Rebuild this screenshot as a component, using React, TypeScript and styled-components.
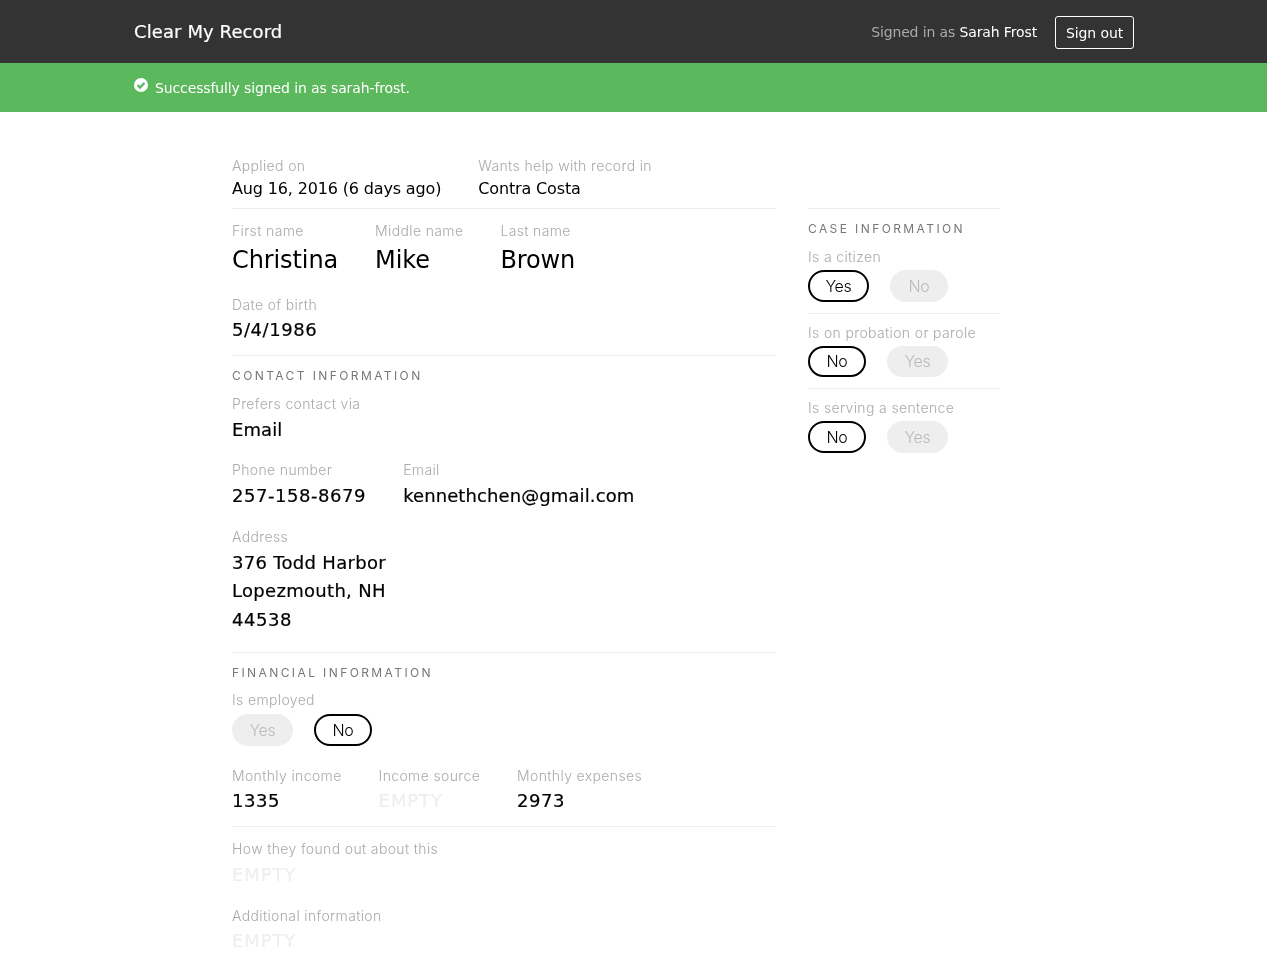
import React from "react";
import styled, { createGlobalStyle } from "styled-components";

const GlobalStyle = createGlobalStyle`
  html, body {
    margin: 0;
    padding: 0;
    background: #ffffff;
    font-family: "DejaVu Sans", Verdana, sans-serif;
    font-weight: 400;
    color: #000000;
  }
`;

const thinFont = `Inter, "Noto Sans", sans-serif`;

function CheckIcon() {
  return (
    <svg width="14" height="14" viewBox="0 0 14 14">
      <circle cx="7" cy="7" r="7" fill="#ffffff" />
      <path d="M3.6 7.2 L6 9.5 L10.4 5" fill="none" stroke="#5cb85c" strokeWidth="2.4" />
    </svg>
  );
}

function Toggle({ options }: { options: { label: string; on?: boolean }[] }) {
  return (
    <ToggleRow>
      {options.map((o) => (
        <Pill key={o.label} on={o.on} wide={o.label === "Yes"}>
          {o.label}
        </Pill>
      ))}
    </ToggleRow>
  );
}

function App() {
  return (
    <Root>
      <GlobalStyle />
      <Navbar>
        <Container>
          <Brand>Clear My Record</Brand>
          <NavRight>
            <SignedIn>
              Signed in as <strong>Sarah Frost</strong>
            </SignedIn>
            <SignOut>Sign out</SignOut>
          </NavRight>
        </Container>
      </Navbar>
      <Flash>
        <FlashInner>
          <FlashIcon>
            <CheckIcon />
          </FlashIcon>
          <span>Successfully signed in as sarah-frost.</span>
        </FlashInner>
      </Flash>
      <Page>
        <Main>
          <TopRow>
            <Field>
              <Label>Applied on</Label>
              <PlainValue>Aug 16, 2016 (6 days ago)</PlainValue>
            </Field>
            <Field>
              <Label>Wants help with record in</Label>
              <PlainValue>Contra Costa</PlainValue>
            </Field>
          </TopRow>
          <Section>
            <NameRow>
              <Field>
                <Label>First name</Label>
                <NameValue>Christina</NameValue>
              </Field>
              <Field>
                <Label>Middle name</Label>
                <NameValue>Mike</NameValue>
              </Field>
              <Field>
                <Label>Last name</Label>
                <NameValue>Brown</NameValue>
              </Field>
            </NameRow>
            <DobRow>
              <Field>
                <Label>Date of birth</Label>
                <Value digits>5/4/1986</Value>
              </Field>
            </DobRow>
          </Section>
          <Section>
            <Heading>Contact information</Heading>
            <Row>
              <Field>
                <Label>Prefers contact via</Label>
                <Value nudge={0.5}>Email</Value>
              </Field>
            </Row>
            <Row below={17}>
              <Field>
                <Label>Phone number</Label>
                <Value digits nudge={0.5}>257-158-8679</Value>
              </Field>
              <Field>
                <Label>Email</Label>
                <Value nudge={0.5}>kennethchen@gmail.com</Value>
              </Field>
            </Row>
            <Row below={18}>
              <Field>
                <Label>Address</Label>
                <Value address nudge={0.5}>376 Todd Harbor</Value>
                <Value address>Lopezmouth, NH</Value>
                <Value digits>44538</Value>
              </Field>
            </Row>
          </Section>
          <Section>
            <Heading>Financial information</Heading>
            <EmployedRow below={20.5}>
              <Field>
                <Label>Is employed</Label>
                <Toggle options={[{ label: "Yes" }, { label: "No", on: true }]} />
              </Field>
            </EmployedRow>
            <Row below={11}>
              <Field>
                <Label>Monthly income</Label>
                <Value digits nudge={-0.5}>1335</Value>
              </Field>
              <Field>
                <Label>Income source</Label>
                <Value empty nudge={-0.5}>EMPTY</Value>
              </Field>
              <Field>
                <Label>Monthly expenses</Label>
                <Value digits nudge={-0.5}>2973</Value>
              </Field>
            </Row>
          </Section>
          <Section>
            <Row below={17}>
              <Field>
                <Label>How they found out about this</Label>
                <Value empty nudge={0.5}>EMPTY</Value>
              </Field>
            </Row>
            <Row>
              <Field>
                <Label>Additional information</Label>
                <Value empty nudge={-0.5}>EMPTY</Value>
              </Field>
            </Row>
          </Section>
        </Main>
        <Side>
          <SideBlock first>
            <Heading>Case information</Heading>
            <Label>Is a citizen</Label>
            <Toggle options={[{ label: "Yes", on: true }, { label: "No" }]} />
          </SideBlock>
          <SideBlock>
            <Label>Is on probation or parole</Label>
            <Toggle options={[{ label: "No", on: true }, { label: "Yes" }]} />
          </SideBlock>
          <SideBlock>
            <Label>Is serving a sentence</Label>
            <Toggle options={[{ label: "No", on: true }, { label: "Yes" }]} />
          </SideBlock>
        </Side>
      </Page>
    </Root>
  );
}

export default App;

const Root = styled.div`
  will-change: transform;
`;
const Navbar = styled.header`
  height: 63px;
  background: #333333;
`;
const Container = styled.div`
  width: 1000px;
  height: 100%;
  margin-left: 134px;
  display: flex;
  align-items: center;
  justify-content: space-between;
`;
const Brand = styled.div`
  color: #ffffff;
  font-size: 18px;
  font-weight: 400;
  letter-spacing: 0.1px;
  -webkit-text-stroke: 0.2px #ffffff;
`;
const NavRight = styled.div`
  display: flex;
  align-items: center;
  gap: 18px;
`;
const SignedIn = styled.div`
  color: #aaaaaa;
  font-size: 14px;
  letter-spacing: -0.13px;
  strong {
    color: #ffffff;
    font-weight: 400;
  }
`;
const SignOut = styled.button`
  height: 33px;
  width: 79px;
  margin-top: 2px;
  padding: 0;
  background: transparent;
  border: 1px solid #ffffff;
  border-radius: 3px;
  color: #ffffff;
  font: inherit;
  font-size: 14px;
  letter-spacing: -0.1px;
`;
const Flash = styled.div`
  height: 49px;
  background: #5cb85c;
`;
const FlashInner = styled.div`
  margin-left: 134px;
  padding-top: 15px;
  display: flex;
  gap: 7px;
  color: #ffffff;
  font-size: 14px;
  line-height: 20px;
  letter-spacing: -0.12px;
`;
const FlashIcon = styled.span`
  display: block;
  height: 14px;
  margin-top: -1px;
`;
const Page = styled.main`
  width: 768px;
  margin-left: 232px;
  display: flex;
  gap: 32px;
  padding-top: 44px;
`;
const Main = styled.div`
  width: 544px;
`;
const Side = styled.aside`
  width: 192px;
  padding-top: 52px;
`;
const TopRow = styled.div`
  display: flex;
  gap: 37px;
  padding-bottom: 7px;
`;
const Section = styled.section`
  border-top: 1px solid #eeeeee;
  padding: 12px 0 0;
`;
const NameRow = styled.div`
  display: flex;
  gap: 37px;
`;
const DobRow = styled.div`
  display: flex;
  margin-top: 17px;
  padding-bottom: 10.5px;
`;
const Row = styled.div<{ below?: number }>`
  display: flex;
  gap: 37px;
  margin-bottom: ${(p) => p.below ?? 16}px;
`;
const EmployedRow = styled(Row)`
  margin-top: -1px;
`;
const Field = styled.div`
  display: flex;
  flex-direction: column;
`;
const Label = styled.div`
  margin-bottom: 1px;
  color: #aaaaaa;
  font-family: ${thinFont};
  font-size: 14px;
  font-weight: 300;
  line-height: 20px;
  letter-spacing: 0.36px;
`;
const PlainValue = styled.div`
  font-size: 16px;
  line-height: 24px;
  letter-spacing: -0.15px;
`;
const NameValue = styled.div`
  font-size: 24px;
  line-height: 36px;
  letter-spacing: -0.1px;
`;
const Value = styled.div<{ empty?: boolean; digits?: boolean; address?: boolean; nudge?: number }>`
  margin-top: ${(p) => p.nudge ?? 0}px;
  color: ${(p) => (p.empty ? "#eeeeee" : "#000000")};
  font-size: 18px;
  line-height: 28.5px;
  letter-spacing: ${(p) => (p.empty ? "0.9px" : p.digits ? "0.55px" : p.address ? "0.3px" : "0.1px")};
  -webkit-text-stroke: 0.2px ${(p) => (p.empty ? "#eeeeee" : "#000000")};
`;
const Heading = styled.h3`
  margin: -1px 0 9px;
  color: #777777;
  font-family: ${thinFont};
  font-size: 12px;
  font-weight: 400;
  letter-spacing: 2.4px;
  line-height: 18px;
  text-transform: uppercase;
`;
const SideBlock = styled.div<{ first?: boolean }>`
  border-top: 1px solid #eeeeee;
  padding: ${(p) => (p.first ? "12px" : "9px")} 0 11px;
`;
const ToggleRow = styled.div`
  display: flex;
  gap: 21px;
  margin-top: 3px;
`;
const Pill = styled.span<{ on?: boolean; wide?: boolean }>`
  box-sizing: border-box;
  width: ${(p) => (p.wide ? "61px" : "58px")};
  height: 31.5px;
  display: flex;
  align-items: center;
  justify-content: center;
  border-radius: 16px;
  font-family: ${thinFont};
  font-weight: 300;
  font-size: 16px;
  letter-spacing: -0.3px;
  color: ${(p) => (p.on ? "#000000" : "#bbbbbb")};
  background: ${(p) => (p.on ? "#ffffff" : "#eeeeee")};
  border: 2px solid ${(p) => (p.on ? "#000000" : "#eeeeee")};
`;
